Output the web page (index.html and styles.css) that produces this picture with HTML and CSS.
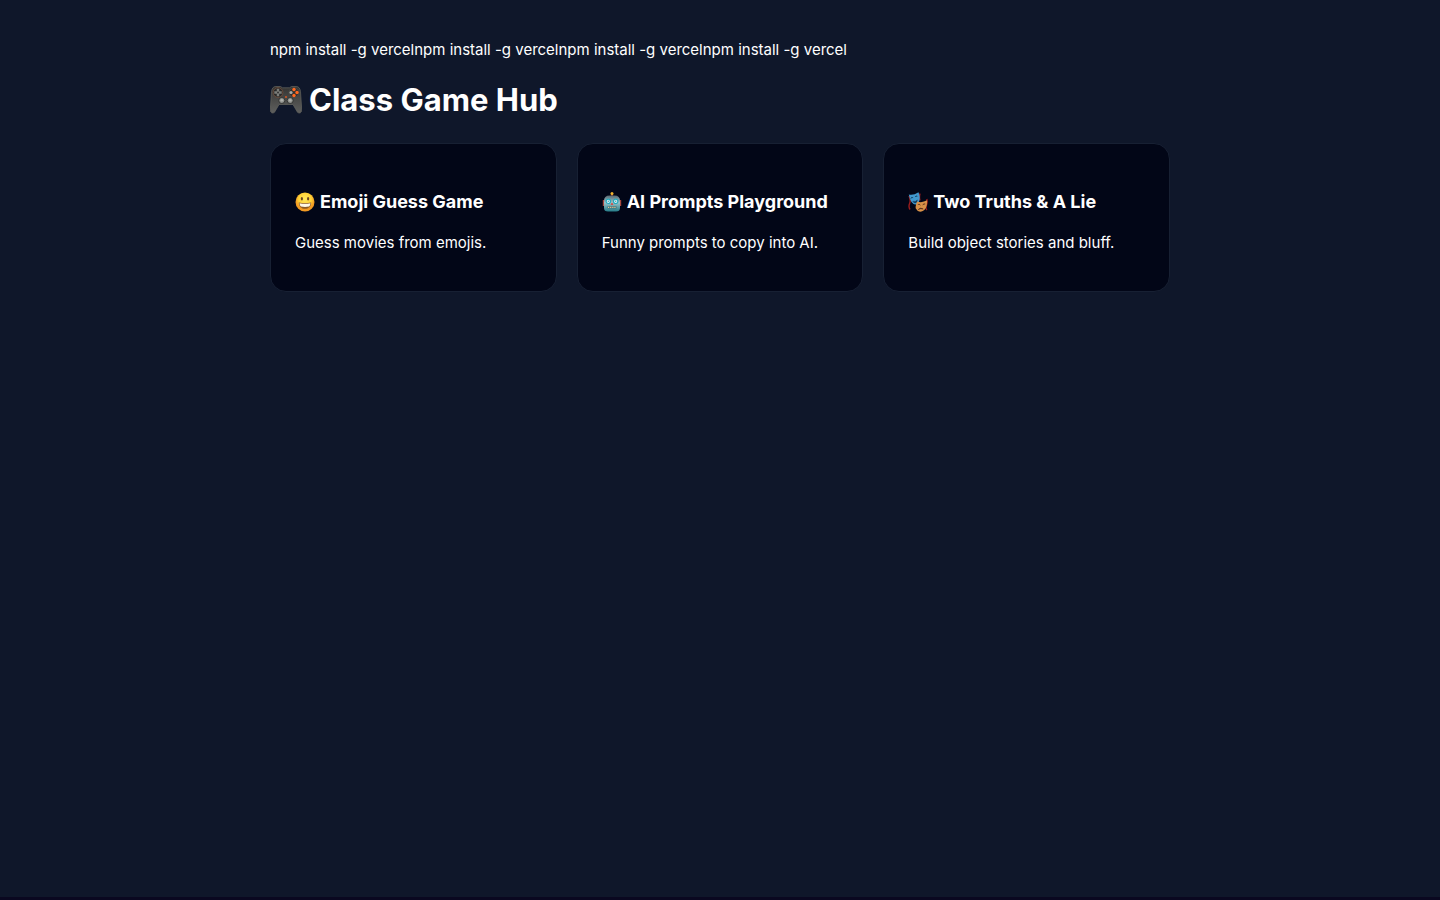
FILE: index.html
```
<!DOCTYPE html>
<html lang="en">
<head>
<meta charset="utf-8">
<meta name="viewport" content="width=device-width, initial-scale=1">
<title>Class Game Hub</title>
<link rel="stylesheet" href="styles.css">
</head>
<body>
<main class="hub">
  <div class="note">npm install -g vercelnpm install -g vercelnpm install -g vercelnpm install -g vercel</div>
  <h1 class="title">
    <svg class="title-icon" viewBox="0 0 32 32" aria-hidden="true">
      <defs><linearGradient id="pad" x2="0" y2="1"><stop offset="0" stop-color="#343433"/><stop offset="1" stop-color="#5f605e"/></linearGradient></defs>
      <path d="M6 2.500h4.500l2 1.300h7l2-1.300H26c3 0 4 2 4.500 5l1.200 18c.2 3-2 4.500-4.200 2.800L23 20.500H9l-4.500 7.800C2.300 30 .1 28.500.3 25.500l1.200-18C2 4.500 3 2.500 6 2.500z" fill="url(#pad)" stroke="#66665f" stroke-width=".7"/>
      <circle cx="8" cy="8.500" r="4.900" fill="#292a2a" stroke="#75513e" stroke-width=".8"/>
      <circle cx="24" cy="8.500" r="4.900" fill="#303131" stroke="#55544f" stroke-width=".6"/>
      <path d="M8 4.800v7.400M4.300 8.500h7.400" stroke="#7c7e7a" stroke-width="2.400"/>
      <circle cx="8" cy="8.500" r="1" fill="#333"/>
      <g fill="#ff681f"><circle cx="24" cy="5.500" r="1.700"/><circle cx="27" cy="8.500" r="1.700"/><circle cx="24" cy="11.500" r="1.700"/></g>
      <circle cx="21" cy="8.500" r="1.600" fill="#aaa9a3"/>
      <g fill="#8e908c" stroke="#252625" stroke-width=".8"><circle cx="11.800" cy="16.500" r="3"/><circle cx="20.200" cy="16.500" r="3"/></g>
      <g fill="#b0b1ac"><circle cx="11.800" cy="16.200" r="1.300"/><circle cx="20.200" cy="16.200" r="1.300"/></g>
      <circle cx="16" cy="13" r=".9" fill="#e65a20"/>
    </svg>
    <span>Class Game Hub</span>
  </h1>
  <nav class="games" aria-label="Games">
    <a class="card" href="#emoji">
      <h3 class="card-title">
        <svg class="card-icon" viewBox="0 0 20 20" aria-hidden="true">
          <defs><radialGradient id="face" cy=".35"><stop offset="0" stop-color="#ffe85c"/><stop offset=".65" stop-color="#ffd136"/><stop offset="1" stop-color="#f39a22"/></radialGradient></defs>
          <circle cx="10" cy="10" r="9.500" fill="url(#face)"/>
          <g fill="#6a4420"><ellipse cx="6.900" cy="6.800" rx="1.100" ry="1.700"/><ellipse cx="13.100" cy="6.800" rx="1.100" ry="1.700"/></g>
          <path d="M3.800 10.500q6.200 1.200 12.400 0c0 4-2.700 6.300-6.200 6.300s-6.200-2.300-6.200-6.300z" fill="#8c5a24"/>
          <path d="M4.500 11.200q5.500 1 11 0-.2 2.300-1.400 3.300-4.100.8-8.200 0-1.200-1-1.400-3.300z" fill="#fff9e6"/>
        </svg>
        <span>Emoji Guess Game</span>
      </h3>
      <p class="card-text">Guess movies from emojis.</p>
    </a>
    <a class="card" href="#prompts">
      <h3 class="card-title">
        <svg class="card-icon" viewBox="0 0 20 20" aria-hidden="true">
          <defs><linearGradient id="bot" x2="0" y2="1"><stop offset="0" stop-color="#596a73"/><stop offset=".45" stop-color="#9ac1c8"/><stop offset="1" stop-color="#247c88"/></linearGradient></defs>
          <path d="M9.200 2h1.600v3H9.200z" fill="#a63a28"/>
          <circle cx="10" cy="1.600" r="1.500" fill="#f3b52e"/>
          <path d="M.8 8h2v6h-2zM17.200 8h2v6h-2z" fill="#a9483e"/>
          <path d="M2 9q0-5.500 5.500-5.500h5Q18 3.500 18 9v7q0 3.500-4 3.500H6q-4 0-4-3.500z" fill="url(#bot)"/>
          <g fill="#d9faff" stroke="#24a9bd" stroke-width="1.200"><circle cx="6.300" cy="9.300" r="2.200"/><circle cx="13.700" cy="9.300" r="2.200"/></g>
          <g fill="#5b929e"><circle cx="6.300" cy="9.300" r=".7"/><circle cx="13.700" cy="9.300" r=".7"/></g>
          <path d="M10 10.500l1.400 2.300H8.600z" fill="#e0352b"/>
          <path d="M5.500 14.300h9v2.200h-9z" fill="#397078"/>
          <path d="M6 15.400h8" stroke="#e3c193" stroke-width="1.100" stroke-dasharray="1.300 .8"/>
        </svg>
        <span>AI Prompts Playground</span>
      </h3>
      <p class="card-text">Funny prompts to copy into AI.</p>
    </a>
    <a class="card" href="#truths">
      <h3 class="card-title">
        <svg class="card-icon" viewBox="0 0 20 20" aria-hidden="true">
          <path d="M1 4q2 4 .6 7.500t.5 6M12 1.500q-1 4 0 7M18.800 7q1 3-.3 6t.4 5" fill="none" stroke="#9c1c1d" stroke-width="1.400"/>
          <path d="M.8 2.500Q5 3.800 10.500.3q2 5 .7 8.600-1.200 3.500-4 3.600Q2.500 11.500.8 2.500z" fill="#4199cf"/>
          <path d="M2.500 6.500q1.200-1.800 2.700-.8M7 5q1-1.800 2.500-.8M4.800 9.300q3 .8 4.500-1.400-.1 3-2.200 3-1.500 0-2.300-1.600z" fill="#103553" stroke="#143e61" stroke-width=".5"/>
          <path d="M9.200 9.500q5 1.700 9.800-1.200.6 8-4.200 10.800Q10 21 7.800 16.600q-.8-2.900 1.400-7.100z" fill="#d99148"/>
          <path d="M9.800 12.500q1.600-.8 2.700.8M14.600 13q1.200-1.800 2.700-1M10.200 17.600q2.300-2.700 5-.6-2.700-.8-5 .6z" fill="#522819" stroke="#522819" stroke-width=".5"/>
        </svg>
        <span>Two Truths &amp; A Lie</span>
      </h3>
      <p class="card-text">Build object stories and bluff.</p>
    </a>
  </nav>
</main>
</body>
</html>
```
FILE: styles.css
```
* { box-sizing: border-box; }

html { background: #0a0820; }

body {
  min-height: calc(100vh - 3px);
  margin: 0;
  padding: 40px 20px;
  background: #0f172a;
  color: #fff;
  font: 15px/20px Inter, "Liberation Sans", sans-serif;
}

.hub {
  max-width: 900px;
  margin: 0 auto;
}

.title {
  display: flex;
  align-items: center;
  gap: 7px;
  margin: 20px 0 23px;
  font-size: 31px;
  line-height: 40px;
}

.title-icon { width: 32px; height: 32px; }

.games {
  display: grid;
  grid-template-columns: repeat(auto-fit, minmax(240px, 1fr));
  gap: 20px;
}

.card {
  padding: 24px;
  border: 1px solid #172033;
  border-radius: 16px;
  background: #020617;
  color: inherit;
  text-decoration: none;
}

.card-title {
  display: flex;
  align-items: center;
  gap: 5px;
  margin: 20px 0 17px;
  font-size: 18px;
  line-height: 28px;
}

.card-icon { flex: none; width: 20px; height: 20px; }

.card-text {
  margin: 0 0 14px;
  line-height: 20px;
}
```
